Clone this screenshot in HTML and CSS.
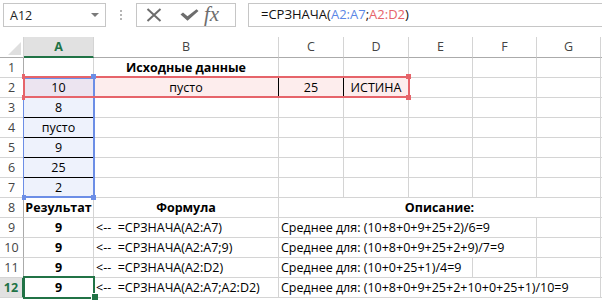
FILE: index.html
```html
<!DOCTYPE html>
<html>
<head>
<meta charset="utf-8">
<link rel="stylesheet" href="styles.css">
</head>
<body>
<div class="app">
  <div class="toolbar">
    <div class="namebox"><span>A12</span><span class="dd"></span></div>
    <div class="grip"><i></i><i></i><i></i></div>
    <div class="btns">
      <svg class="ico-x" width="16" height="14" viewBox="0 0 16 14"><path d="M1.5 1 L14.5 13 M14.5 1 L1.5 13" stroke="#6d6d6d" stroke-width="2" fill="none"/></svg>
      <svg class="ico-ok" width="19" height="12" viewBox="0 0 19 12"><path d="M0.5 5.5 L3 3.5 L7.5 7.2 L16.5 0.3 L18.5 2 L7.5 11.8 Z" fill="#6d6d6d"/></svg>
      <span class="fx">fx</span>
    </div>
    <div class="fbox">=СРЗНАЧА(<span class="rb">A2:A7</span>;<span class="rr">A2:D2</span>)</div>
  </div>

  <div class="sheet">
    <div class="corner"><i></i></div>
    <div class="ch sel">A</div><div class="ch">B</div><div class="ch">C</div><div class="ch">D</div><div class="ch">E</div><div class="ch">F</div><div class="ch">G</div><div class="fill"></div>

    <div class="rh">1</div>
    <div class="c"></div><div class="c ctr b">Исходные данные</div><div class="c"></div><div class="c"></div><div class="c"></div><div class="c"></div><div class="c"></div><div class="fill"></div>

    <div class="rh">2</div>
    <div class="c ctr lav">10</div><div class="c ctr pink bk-r">пусто</div><div class="c ctr pink bk-r">25</div><div class="c ctr pink">ИСТИНА</div><div class="c"></div><div class="c"></div><div class="c"></div><div class="fill"></div>

    <div class="rh">3</div>
    <div class="c ctr blu bk-b">8</div><div class="c"></div><div class="c"></div><div class="c"></div><div class="c"></div><div class="c"></div><div class="c"></div><div class="fill"></div>

    <div class="rh">4</div>
    <div class="c ctr blu bk-b">пусто</div><div class="c"></div><div class="c"></div><div class="c"></div><div class="c"></div><div class="c"></div><div class="c"></div><div class="fill"></div>

    <div class="rh">5</div>
    <div class="c ctr blu bk-b">9</div><div class="c"></div><div class="c"></div><div class="c"></div><div class="c"></div><div class="c"></div><div class="c"></div><div class="fill"></div>

    <div class="rh">6</div>
    <div class="c ctr blu bk-b">25</div><div class="c"></div><div class="c"></div><div class="c"></div><div class="c"></div><div class="c"></div><div class="c"></div><div class="fill"></div>

    <div class="rh">7</div>
    <div class="c ctr blu">2</div><div class="c"></div><div class="c"></div><div class="c"></div><div class="c"></div><div class="c"></div><div class="c"></div><div class="fill"></div>

    <div class="rh">8</div>
    <div class="c ctr b">Результат</div><div class="c ctr b">Формула</div><div class="c ctr b span5">Описание:</div><div class="fill"></div>

    <div class="rh">9</div>
    <div class="c ctr b">9</div><div class="c lft">&lt;--&nbsp; =СРЗНАЧА(A2:A7)</div><div class="c lft span4">Среднее для: (10+8+0+9+25+2)/6=9</div><div class="c"></div><div class="fill"></div>

    <div class="rh">10</div>
    <div class="c ctr b">9</div><div class="c lft">&lt;--&nbsp; =СРЗНАЧА(A2:A7;9)</div><div class="c lft span4">Среднее для: (10+8+0+9+25+2+9)/7=9</div><div class="c"></div><div class="fill"></div>

    <div class="rh">11</div>
    <div class="c ctr b">9</div><div class="c lft">&lt;--&nbsp; =СРЗНАЧА(A2:D2)</div><div class="c lft span3">Среднее для: (10+0+25+1)/4=9</div><div class="c"></div><div class="c"></div><div class="fill"></div>

    <div class="rh sel">12</div>
    <div class="c ctr b">9</div><div class="c lft">&lt;--&nbsp; =СРЗНАЧА(A2:A7;A2:D2)</div><div class="c lft span5">Среднее для: (10+8+0+9+25+2+10+0+25+1)/10=9</div><div class="fill"></div>

    <div class="rng-blue"></div>
    <div class="rng-red"></div>
    <div class="h hb h-b1"></div>
    <div class="h hb h-b2"></div>
    <div class="h hb h-b3"></div>
    <div class="h hr h-r1"></div>
    <div class="h hr h-r2"></div>
    <div class="h hr h-r3"></div>
    <div class="h hr h-r4"></div>
    <div class="cursel"></div>
    <div class="h hg"></div>
  </div>
</div>
</body>
</html>
```

FILE: styles.css
```css
html, body {
  margin: 0;
  padding: 0;
  background: #ffffff;
}
.app {
  width: 602px;
  height: 301px;
  overflow: hidden;
  font-family: "Open Sans", "Liberation Sans", sans-serif;
  font-size: 12.5px;
  color: #000;
}
.toolbar {
  height: 37px;
  display: flex;
  align-items: flex-start;
  padding-top: 3px;
  box-sizing: border-box;
}
.namebox {
  margin-left: 3px;
  width: 103px;
  height: 24px;
  box-sizing: border-box;
  border: 1px solid #c6c6c6;
  display: flex;
  align-items: center;
  justify-content: space-between;
  padding: 0 6px 0 6px;
  font-size: 12.5px;
  color: #222;
}
.dd {
  width: 0;
  height: 0;
  border-left: 4px solid transparent;
  border-right: 4px solid transparent;
  border-top: 4px solid #7a7a7a;
}
.grip {
  width: 30px;
  height: 24px;
  display: flex;
  flex-direction: column;
  align-items: center;
  justify-content: center;
  gap: 2px;
}
.grip i {
  display: block;
  width: 2px;
  height: 2px;
  background: #b5b5b5;
}
.btns {
  width: 100px;
  height: 24px;
  box-sizing: border-box;
  border: 1px solid #c6c6c6;
  display: flex;
  align-items: center;
  padding-left: 9px;
}
.ico-x { margin-right: 20px; }
.ico-ok { margin-right: 5px; margin-left: -2px; }
.fx {
  font-family: "Liberation Serif", serif;
  font-style: italic;
  font-size: 21px;
  color: #6d6d6d;
  line-height: 20px;
  margin-top: -3px;
}
.fbox {
  margin-left: 12px;
  flex: 1;
  height: 24px;
  box-sizing: border-box;
  border: 1px solid #c6c6c6;
  border-right: none;
  padding-left: 12px;
  line-height: 21px;
  font-size: 13px;
  color: #111;
}
.rb { color: #5b87e6; }
.rr { color: #e6646a; }

.sheet {
  position: relative;
  display: grid;
  grid-template-columns: 24px 70px 185px 65px 65px 64px 64px 64px 1fr;
  grid-template-rows: 21px repeat(12, 20px);
}
.corner {
  position: relative;
  border-right: 1px solid #d4d4d4;
  border-bottom: 1px solid #ababab;
  box-sizing: border-box;
}
.corner i {
  position: absolute;
  right: 2px;
  bottom: 2px;
  width: 0;
  height: 0;
  border-left: 13px solid transparent;
  border-bottom: 13px solid #dfdfdf;
}
.ch {
  box-sizing: border-box;
  border-right: 1px solid #d4d4d4;
  border-bottom: 1px solid #ababab;
  text-align: center;
  line-height: 20px;
  color: #444;
  font-size: 12.5px;
}
.ch.sel {
  background: #e1e1e1;
  border-bottom: 2px solid #217346;
  color: #217346;
  font-weight: bold;
}
.rh {
  box-sizing: border-box;
  border-right: 1px solid #ababab;
  border-bottom: 1px solid #d4d4d4;
  text-align: center;
  line-height: 19px;
  color: #444;
  font-size: 12.5px;
}
.rh.sel {
  background: #e1e1e1;
  color: #217346;
  font-weight: bold;
  border-right: 2px solid #217346;
}
.c {
  box-sizing: border-box;
  border-right: 1px solid #d4d4d4;
  border-bottom: 1px solid #d4d4d4;
  line-height: 19px;
  white-space: nowrap;
  overflow: visible;
}
.fill { border-bottom: 1px solid #d4d4d4; }
.ch + .fill { border-bottom: 1px solid #ababab; }
.ctr { text-align: center; }
.lft { padding-left: 2px; }
.b { font-weight: bold; }
.span3 { grid-column: span 3; }
.span4 { grid-column: span 4; }
.span5 { grid-column: span 5; }
.lav { background: #ece4f0; }
.pink { background: #fdeded; }
.blu { background: #eef2fc; }
.bk-b { border-bottom-color: #000; }
.bk-r { border-right-color: #000; }

.rng-blue {
  position: absolute;
  left: 23px;
  top: 40px;
  width: 72px;
  height: 121px;
  box-sizing: border-box;
  border: 2px solid #6c8ee6;
  border-left-width: 1px;
}
.rng-red {
  position: absolute;
  left: 23px;
  top: 39px;
  width: 387px;
  height: 22px;
  box-sizing: border-box;
  border: 2px solid #e6646a;
}
.h {
  position: absolute;
  width: 5px;
  height: 5px;
}
.hb { background: #6c8ee6; }
.hr { background: #e6646a; }
.h-b1 { left: 91px; top: 37px; }
.h-b2 { left: 91px; top: 158px; }
.h-b3 { left: 22px; top: 158px; width: 4px; }
.h-r1 { left: 406px; top: 37px; }
.h-r2 { left: 406px; top: 58px; }
.h-r3 { left: 22px; top: 37px; width: 3px; }
.h-r4 { left: 22px; top: 58px; width: 3px; }
.cursel {
  position: absolute;
  left: 23px;
  top: 239px;
  width: 72px;
  height: 23px;
  box-sizing: border-box;
  border: 2px solid #217346;
}
.hg {
  background: #217346;
  left: 91px;
  top: 256px;
  width: 6px;
  height: 6px;
  border-left: 1px solid #fff;
  border-top: 1px solid #fff;
}
```
